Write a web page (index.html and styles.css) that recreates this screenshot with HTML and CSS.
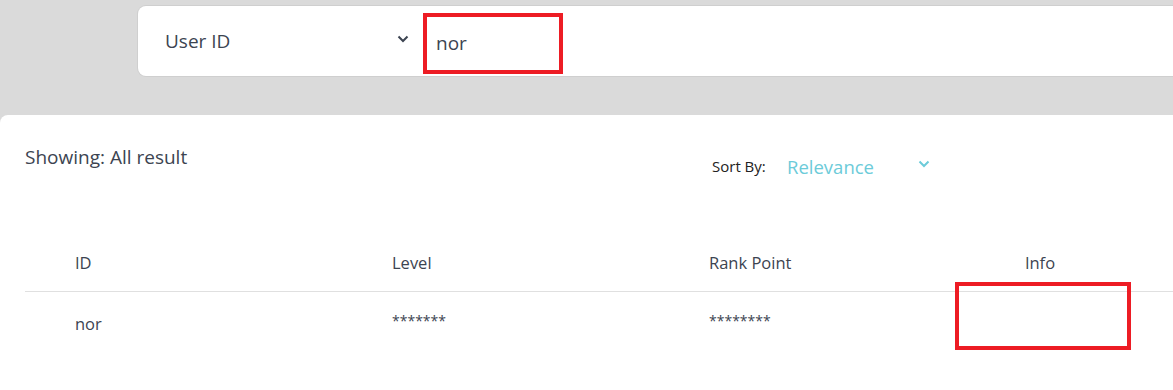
FILE: index.html
```html
<html>
<head>
<link rel="stylesheet" href="styles.css">
</head>
<body>
	<div class="top">
		<div class="searchCard">
			<div class="field">
				<span class="fieldLabel">User ID</span>
				<svg class="chev" width="12" height="8" viewBox="0 0 12 8"><path d="M1.5 1.5 L6 6 L10.5 1.5" fill="none" stroke="#3c4451" stroke-width="2"/></svg>
			</div>
			<input type="text" class="query" value="nor">
		</div>
	</div>

	<div class="results">
		<div class="toolbar">
			<p class="showing">Showing: All result</p>
			<div class="sort">
				<span class="sortLabel">Sort By:</span>
				<span class="sortValue">Relevance</span>
				<svg class="chev" width="12" height="8" viewBox="0 0 12 8"><path d="M1.5 1.5 L6 6 L10.5 1.5" fill="none" stroke="#6ccbd9" stroke-width="2"/></svg>
			</div>
		</div>

		<div class="table">
			<div class="row head">
				<div>ID</div>
				<div>Level</div>
				<div>Rank Point</div>
				<div class="info">Info</div>
			</div>
			<div class="row body">
				<div>nor</div>
				<div class="stars">*******</div>
				<div class="stars">********</div>
				<div class="info"><span class="mark"></span></div>
			</div>
		</div>
	</div>
</body>
</html>
```

FILE: styles.css
```css
body {
	margin: 0;
	background: #dadada;
	font-family: "Open Sans", "Noto Sans", sans-serif;
	color: #3c4451;
	overflow: hidden;
}

.top {
	padding: 6px 0 0 138px;
}

.searchCard {
	display: flex;
	height: 70px;
	background: #fff;
	border-radius: 8px 0 0 8px;
	box-shadow: 0 0 0 1px #cfcfcf;
}

.field {
	display: flex;
	align-items: center;
	width: 285px;
	padding-left: 27px;
	box-sizing: border-box;
}

.fieldLabel {
	font-size: 19px;
	flex: 1;
}

.field .chev {
	margin-right: 14px;
	margin-top: -4px;
}

.query {
	align-self: flex-start;
	margin-top: 7px;
	width: 140px;
	height: 61px;
	box-sizing: border-box;
	border: 4px solid #ed1c24;
	padding: 0 0 2px 9px;
	font: 19px "Open Sans", sans-serif;
	color: #3c4451;
	outline: none;
}

.results {
	margin-top: 39px;
	background: #fff;
	border-radius: 8px 0 0 0;
	height: 275px;
	padding: 0 0 0 25px;
}

.toolbar {
	display: flex;
	padding-top: 29px;
}

.showing {
	margin: 0;
	font-size: 19px;
	width: 687px;
}

.sort {
	display: flex;
	align-items: center;
	margin-top: 9px;
	height: 26px;
}

.sortLabel {
	font-size: 15px;
	color: #222;
	width: 75px;
}

.sortValue {
	font-size: 18.5px;
	color: #6ccbd9;
	width: 131px;
}

.sort .chev {
	margin-top: -4px;
}

.table {
	margin-top: 54px;
}

.row {
	display: grid;
	grid-template-columns: 317px 317px 250px 162px;
	padding-left: 50px;
	font-size: 16.5px;
}

.row.head {
	height: 58px;
	line-height: 60px;
	border-bottom: 1px solid #e0e0e0;
}

.row.body {
	height: 64px;
	line-height: 64px;
}

.info {
	text-align: center;
	position: relative;
}

.stars {
	font-size: 14px;
	line-height: 58px;
}

.mark {
	position: absolute;
	left: -4px;
	top: -10px;
	width: 176px;
	height: 68px;
	box-sizing: border-box;
	border: 4px solid #ed1c24;
}
```
